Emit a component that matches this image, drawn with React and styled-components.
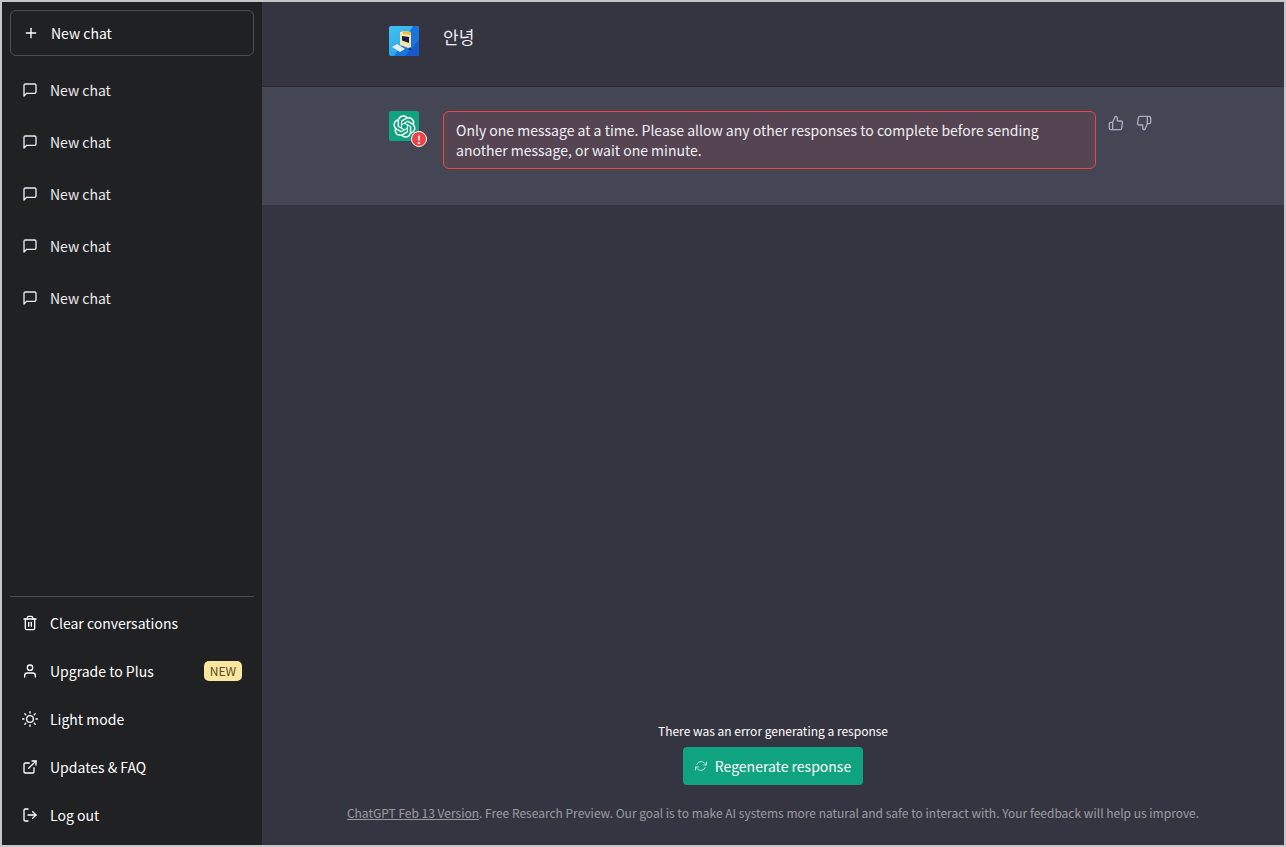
import React from 'react';
import styled, { createGlobalStyle } from 'styled-components';
import {
  FiExternalLink,
  FiLogOut,
  FiMessageSquare,
  FiPlus,
  FiRefreshCw,
  FiSun,
  FiThumbsDown,
  FiThumbsUp,
  FiTrash2,
  FiUser,
} from 'react-icons/fi';

const GlobalStyle = createGlobalStyle`
  html, body, #root {
    height: 100%;
    margin: 0;
  }
  * {
    box-sizing: border-box;
  }
  body {
    font-family: "Noto Sans CJK KR", "Noto Sans", sans-serif;
    font-size: 14px;
    color: #ececf1;
    overflow: hidden;
  }
`;

const Frame = styled.div`
  display: flex;
  height: 100%;
  border: 2px solid #c6c6c6;
  background: #343541;
`;

const Sidebar = styled.aside`
  display: flex;
  flex-direction: column;
  flex: 0 0 260px;
  padding: 8px;
  background: #202123;
`;

const NewChatButton = styled.div`
  display: flex;
  align-items: center;
  gap: 12px;
  height: 46px;
  padding: 0 12px;
  margin-bottom: 12px;
  border: 1px solid rgba(255, 255, 255, 0.2);
  border-radius: 6px;
  color: #fff;
`;

const ChatList = styled.div`
  display: flex;
  flex-direction: column;
  flex: 1;
  gap: 8px;
`;

const Item = styled.div`
  display: flex;
  align-items: center;
  gap: 12px;
  height: 44px;
  padding: 0 12px;
  color: ${(p) => (p.$bright ? '#fff' : '#ececf1')};
`;

const Menu = styled.div`
  display: flex;
  flex-direction: column;
  gap: 4px;
  padding-top: 4px;
  border-top: 1px solid rgba(255, 255, 255, 0.2);
`;

const Label = styled.span`
  flex: 1;
`;

const NewBadge = styled.span`
  padding: 2px 6px;
  border-radius: 5px;
  background: #fae69e;
  color: #5b4a2b;
  font-size: 12px;
  line-height: 16px;
`;

const Main = styled.main`
  display: flex;
  flex-direction: column;
  flex: 1;
  min-width: 0;
`;

const Row = styled.div`
  padding: ${(p) => (p.$answer ? '24px 0 35px' : '24px 0 30px')};
  background: ${(p) => (p.$answer ? '#444654' : '#343541')};
  border-bottom: 1px solid ${(p) => (p.$answer ? 'transparent' : 'rgba(32, 33, 35, 0.5)')};
`;

const RowInner = styled.div`
  display: flex;
  gap: 24px;
  width: 768px;
  margin: 0 auto;
`;

const Avatar = styled.div`
  position: relative;
  display: flex;
  align-items: center;
  justify-content: center;
  flex: 0 0 30px;
  width: 30px;
  height: 30px;
  border-radius: 2px;
  background: ${(p) => p.$bg || 'transparent'};
`;

const ErrorDot = styled.span`
  position: absolute;
  right: -8px;
  bottom: -6px;
  width: 16px;
  height: 16px;
  border: 1px solid #fff;
  border-radius: 50%;
  background: #ef4146;
  color: #fff;
  font-size: 11px;
  font-weight: 700;
  line-height: 14px;
  text-align: center;
`;

const Question = styled.div`
  flex: 1;
  font-size: 17px;
  line-height: 22px;
  color: #ececf1;
`;

const ErrorBubble = styled.div`
  flex: 1;
  padding: 8px 12px;
  border: 1px solid #ef4444;
  border-radius: 6px;
  background: rgba(239, 68, 68, 0.1);
  font-size: 14px;
  line-height: 20px;
  color: #f0f0f3;
`;

const Feedback = styled.div`
  display: flex;
  flex: 0 0 auto;
  align-self: flex-start;
  gap: 12px;
  margin: 4px 5px 0 -12px;
  font-size: 16px;
  color: #acacbe;
`;

const Spacer = styled.div`
  flex: 1;
`;

const Bottom = styled.div`
  display: flex;
  flex-direction: column;
  align-items: center;
  padding-bottom: 24px;
`;

const ErrorNote = styled.div`
  margin-bottom: 8px;
  font-size: 12px;
  line-height: 16px;
  color: #fff;
`;

const RegenButton = styled.div`
  display: flex;
  align-items: center;
  gap: 8px;
  height: 38px;
  padding: 0 12px;
  border-radius: 4px;
  background: #10a37f;
  color: #fff;
  font-size: 14px;

  svg {
    opacity: 0.7;
  }
`;

const Footer = styled.div`
  margin-top: 20px;
  font-size: 12px;
  line-height: 16px;
  color: rgba(255, 255, 255, 0.5);

  a {
    color: inherit;
    text-decoration: underline;
  }
`;

const OpenAiLogo = () => (
  <svg width="23" height="23" viewBox="0 0 41 41" fill="none">
    <path
      fill="#fff"
      d="M37.5324 16.8707C37.9808 15.5241 38.1363 14.0974 37.9886 12.6859C37.8409 11.2744 37.3934 9.91076 36.676 8.68622C35.6126 6.83404 33.9882 5.3676 32.0373 4.4985C30.0864 3.62941 27.9098 3.40259 25.8215 3.85078C24.8796 2.7893 23.7219 1.94125 22.4257 1.36341C21.1295 0.785575 19.7249 0.491269 18.3058 0.500197C16.1708 0.495044 14.0893 1.16803 12.3614 2.42214C10.6335 3.67624 9.34853 5.44666 8.6917 7.47815C7.30085 7.76286 5.98686 8.3414 4.8377 9.17505C3.68854 10.0087 2.73073 11.0782 2.02839 12.312C0.956464 14.1591 0.498905 16.2988 0.721698 18.4228C0.944492 20.5467 1.83612 22.5449 3.268 24.1293C2.81966 25.4759 2.66413 26.9026 2.81182 28.3141C2.95951 29.7256 3.40701 31.0892 4.12437 32.3138C5.18791 34.1659 6.8123 35.6322 8.76321 36.5013C10.7141 37.3704 12.8907 37.5973 14.9789 37.1492C15.9208 38.2107 17.0786 39.0587 18.3747 39.6366C19.6709 40.2144 21.0755 40.5087 22.4946 40.4998C24.6307 40.5054 26.7133 39.8321 28.4418 38.5772C30.1704 37.3223 31.4556 35.5506 32.1119 33.5179C33.5027 33.2332 34.8167 32.6547 35.9659 31.821C37.115 30.9874 38.0728 29.9178 38.7752 28.684C39.8458 26.8371 40.3023 24.6979 40.0789 22.5748C39.8556 20.4517 38.9639 18.4544 37.5324 16.8707ZM22.4978 37.8849C20.7443 37.8874 19.0459 37.2733 17.6994 36.1501C17.7601 36.117 17.8666 36.0586 17.936 36.0161L25.9004 31.4156C26.1003 31.3019 26.2663 31.137 26.3813 30.9378C26.4964 30.7386 26.5563 30.5124 26.5549 30.2825V19.0542L29.9213 20.998C29.9389 21.0068 29.9541 21.0198 29.9656 21.0359C29.977 21.052 29.9842 21.0707 29.9867 21.0902V30.3889C29.9842 32.375 29.1946 34.2791 27.7909 35.6841C26.3872 37.0892 24.4838 37.8806 22.4978 37.8849ZM6.39227 31.0064C5.51397 29.4888 5.19742 27.7107 5.49804 25.9832C5.55718 26.0187 5.66048 26.0818 5.73461 26.1244L13.699 30.7248C13.8975 30.8408 14.1233 30.902 14.3532 30.902C14.583 30.902 14.8088 30.8408 15.0073 30.7248L24.731 25.1103V28.9979C24.7321 29.0177 24.7283 29.0376 24.7199 29.0556C24.7115 29.0736 24.6988 29.0893 24.6829 29.1012L16.6317 33.7497C14.9096 34.7416 12.8643 35.0097 10.9447 34.4954C9.02506 33.9811 7.38785 32.7263 6.39227 31.0064ZM4.29707 13.6194C5.17156 12.0998 6.55279 10.9364 8.19885 10.3327C8.19885 10.4013 8.19491 10.5228 8.19491 10.6071V19.808C8.19351 20.0378 8.25334 20.2638 8.36823 20.4629C8.48312 20.6619 8.64893 20.8267 8.84863 20.9404L18.5723 26.5542L15.206 28.4979C15.1894 28.5089 15.1703 28.5155 15.1505 28.5173C15.1307 28.5191 15.1107 28.516 15.0924 28.5082L7.04046 23.8557C5.32135 22.8601 4.06716 21.2235 3.55289 19.3046C3.03862 17.3858 3.30624 15.3413 4.29707 13.6194ZM31.955 20.0556L22.2312 14.4411L25.5976 12.4981C25.6142 12.4872 25.6333 12.4805 25.6531 12.4787C25.6729 12.4769 25.6928 12.4801 25.7111 12.4879L33.7631 17.1364C34.9967 17.849 36.0017 18.8982 36.6606 20.1613C37.3194 21.4244 37.6047 22.849 37.4832 24.2684C37.3617 25.6878 36.8382 27.0432 35.9743 28.1759C35.1103 29.3086 33.9415 30.1717 32.6047 30.6641C32.6047 30.5947 32.6047 30.4733 32.6047 30.3889V21.188C32.6066 20.9586 32.5474 20.7328 32.4332 20.5338C32.319 20.3348 32.154 20.1698 31.955 20.0556ZM35.3055 15.0128C35.2464 14.9765 35.1431 14.9142 35.069 14.8717L27.1045 10.2712C26.906 10.1554 26.6803 10.0943 26.4504 10.0943C26.2206 10.0943 25.9948 10.1554 25.7963 10.2712L16.0726 15.8858V11.9982C16.0715 11.9783 16.0753 11.9585 16.0837 11.9405C16.0921 11.9225 16.1048 11.9068 16.1207 11.8949L24.1719 7.25025C25.4053 6.53903 26.8158 6.19376 28.2383 6.25482C29.6608 6.31589 31.0364 6.78077 32.2044 7.59508C33.3723 8.40939 34.2842 9.53945 34.8334 10.8531C35.3826 12.1667 35.5464 13.6095 35.3055 15.0128ZM14.2424 21.9419L10.8752 19.9981C10.8576 19.9893 10.8423 19.9763 10.8309 19.9602C10.8195 19.9441 10.8122 19.9254 10.8098 19.9058V10.6071C10.8107 9.18295 11.2173 7.78848 11.9819 6.58696C12.7466 5.38544 13.8377 4.42659 15.1275 3.82264C16.4173 3.21869 17.8524 2.99464 19.2649 3.1767C20.6775 3.35876 22.0089 3.93941 23.1034 4.85067C23.0427 4.88379 22.937 4.94215 22.8668 4.98473L14.9024 9.58517C14.7025 9.69878 14.5366 9.86356 14.4215 10.0626C14.3065 10.2616 14.2466 10.4877 14.2479 10.7175L14.2424 21.9419ZM16.071 17.9991L20.4018 15.4978L24.7325 17.9975V22.9985L20.4018 25.4983L16.071 22.9985V17.9991Z"
    />
  </svg>
);

const UserPicture = () => (
  <svg width="30" height="30" viewBox="0 0 30 30">
    <defs>
      <linearGradient id="sky" x1="0" y1="0" x2="0.6" y2="1">
        <stop offset="0" stopColor="#3fc3f0" />
        <stop offset="1" stopColor="#2aa0e8" />
      </linearGradient>
    </defs>
    <rect width="30" height="30" rx="2" fill="url(#sky)" />
    <path d="M30 0v30H5L24 0z" fill="#1b74dc" />
    <path d="M30 14v16H16z" fill="#1659cf" />
    <path d="M11 6l4-1 7 1v15l-3 1-8-3z" fill="#f4e3b2" />
    <path d="M13 10l7 1v6l-7-2.500z" fill="#162036" />
    <path d="M14 5l8 1v3l-8-1z" fill="#f3b93f" />
    <path d="M3 21l5-3 8 5-5 3z" fill="#e3edf7" />
    <path d="M19 23l2-1 2 1-2 1.500z" fill="#0c2f80" />
  </svg>
);

const chats = [1, 2, 3, 4, 5];

const App = () => (
  <>
    <GlobalStyle />
    <Frame>
      <Sidebar>
        <NewChatButton>
          <FiPlus size={16} />
          New chat
        </NewChatButton>
        <ChatList>
          {chats.map((id) => (
            <Item key={id}>
              <FiMessageSquare size={16} />
              <Label>New chat</Label>
            </Item>
          ))}
        </ChatList>
        <Menu>
          <Item $bright>
            <FiTrash2 size={16} />
            <Label>Clear conversations</Label>
          </Item>
          <Item $bright>
            <FiUser size={16} />
            <Label>Upgrade to Plus</Label>
            <NewBadge>NEW</NewBadge>
          </Item>
          <Item $bright>
            <FiSun size={16} />
            <Label>Light mode</Label>
          </Item>
          <Item $bright>
            <FiExternalLink size={16} />
            <Label>Updates &amp; FAQ</Label>
          </Item>
          <Item $bright>
            <FiLogOut size={16} />
            <Label>Log out</Label>
          </Item>
        </Menu>
      </Sidebar>
      <Main>
        <Row>
          <RowInner>
            <Avatar>
              <UserPicture />
            </Avatar>
            <Question>안녕</Question>
          </RowInner>
        </Row>
        <Row $answer>
          <RowInner>
            <Avatar $bg="#10a37f">
              <OpenAiLogo />
              <ErrorDot>!</ErrorDot>
            </Avatar>
            <ErrorBubble>
              Only one message at a time. Please allow any other responses to complete before sending
              another message, or wait one minute.
            </ErrorBubble>
            <Feedback>
              <FiThumbsUp />
              <FiThumbsDown />
            </Feedback>
          </RowInner>
        </Row>
        <Spacer />
        <Bottom>
          <ErrorNote>There was an error generating a response</ErrorNote>
          <RegenButton>
            <FiRefreshCw size={12} />
            Regenerate response
          </RegenButton>
          <Footer>
            <a>ChatGPT Feb 13 Version</a>. Free Research Preview. Our goal is to make AI systems more
            natural and safe to interact with. Your feedback will help us improve.
          </Footer>
        </Bottom>
      </Main>
    </Frame>
  </>
);

export default App;
